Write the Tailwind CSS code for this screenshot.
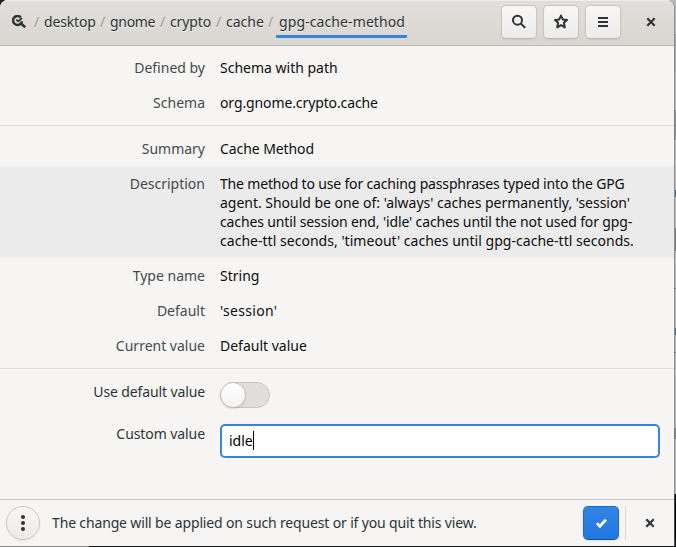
<!DOCTYPE html>
<html lang="en">
<head>
<meta charset="utf-8">
<title>gpg-cache-method</title>
<script src="https://cdn.jsdelivr.net/npm/@tailwindcss/browser@4"></script>
</head>
<body class="relative w-[676px] h-[547px] overflow-hidden bg-[#b9b9b9] font-['Noto_Sans','Open_Sans',sans-serif] text-[14px] leading-[19px] text-[#0c0e0f]">
<!-- Desktop behind the window -->
<div class="absolute inset-0">
  <div class="absolute left-0 top-0 w-4 h-4 bg-[#222]"></div>
  <div class="absolute left-[674px] top-[34px] w-[2px] h-[38px] bg-[#a5a5a5]"></div>
  <div class="absolute left-[674px] top-[110px] w-[2px] h-[30px] bg-[#929292]"></div>
  <div class="absolute left-[675px] top-[190px] w-px h-[7px] bg-[#496579]"></div>
  <div class="absolute left-[675px] top-[228px] w-px h-[23px] bg-[#777]"></div>
  <div class="absolute left-[674px] top-[288px] w-[2px] h-px bg-[#777]"></div>
  <div class="absolute left-[675px] top-[328px] w-px h-[7px] bg-[#496579]"></div>
  <div class="absolute left-[674px] top-[352px] w-[2px] h-px bg-[#777]"></div>
  <div class="absolute left-[674px] top-[428px] w-[2px] h-[11px] bg-[#858585]"></div>
  <div class="absolute left-[674px] top-[494px] w-[2px] h-[53px] bg-black"></div>
  <div class="absolute left-0 top-[540px] w-[89px] h-[7px] bg-[#8b8984]"></div>
  <div class="absolute left-[89px] top-[540px] w-[587px] h-[7px] bg-[#17171a]"></div>
</div>
<main class="relative w-[674px] h-[546px] flex flex-col bg-[#f6f5f4] rounded-t-[8px] overflow-hidden shadow-[1px_0_0_#77777799]">
  <header class="h-[46px] shrink-0 flex items-center border-b border-[#bfb8b1] bg-linear-to-b from-[#e1dedb] to-[#dad6d2] text-[#2e3436] shadow-[inset_0_1px_#f0eeec] [text-shadow:0_1px_#ffffffb0]">
    <svg class="ml-3 -mt-px w-[15px] h-[14px] shrink-0" viewBox="0 0 15 14" fill="none" stroke="#2e3436"><path d="M8.8 2.4A4.5 4.5 0 1 0 10 6.2" stroke-width="2.5"/><path d="M4.2 4.6L6.2 6.4L10 3" stroke-width="1.8"/><path d="M8.6 8.2L13.3 12.2" stroke-width="2.5"/></svg>
    <nav class="flex h-full pt-[12px] whitespace-nowrap">
      <span class="w-[17px] pl-[7px] text-[#929595]">/</span><span class="w-[52px] tracking-[-0.15px]">desktop</span>
      <span class="w-[14px] pl-[4px] text-[#929595]">/</span><span class="w-[46px] tracking-[-0.3px]">gnome</span>
      <span class="w-[14px] pl-[4px] text-[#929595]">/</span><span class="w-[42px] tracking-[-0.1px]">crypto</span>
      <span class="w-[14px] pl-[4px] text-[#929595]">/</span><span class="w-[38px]">cache</span>
      <span class="w-[12px] pl-[4px] text-[#929595]">/</span><span class="w-[131px] h-[26px] pl-[3px] border-b-3 border-[#3584e4] rounded-b-[1px] tracking-[0.1px]">gpg-cache-method</span>
    </nav>
    <div class="ml-auto mr-[18px] flex gap-[6px] items-center">
      <button class="w-9 h-[34px] mt-[-2px] grid place-items-center rounded-[5px] border border-[#cdc7c2] border-b-[#bfb8b1] bg-linear-to-b from-[#f8f7f6] to-[#edebe9] shadow-[0_1px_2px_#00000012]"><svg class="w-4 h-4" viewBox="0 0 16 16" fill="none" stroke="#2e3436" stroke-width="2"><circle cx="6.5" cy="6.2" r="4.5"/><path d="M9.8 9.5l4.4 4.4"/></svg></button>
      <button class="w-9 h-[34px] mt-[-2px] grid place-items-center rounded-[5px] border border-[#cdc7c2] border-b-[#bfb8b1] bg-linear-to-b from-[#f8f7f6] to-[#edebe9] shadow-[0_1px_2px_#00000012]"><svg class="w-4 h-4" viewBox="0 0 16 16" fill="none" stroke="#2e3436" stroke-width="2" stroke-linejoin="round"><path d="M8 1.6l1.8 3.8 4.2.5-3.1 2.9.9 4.6L8 11.2l-3.8 2.2.9-4.6L2 5.9l4.2-.5z"/></svg></button>
      <button class="w-9 h-[34px] mt-[-2px] grid place-items-center rounded-[5px] border border-[#cdc7c2] border-b-[#bfb8b1] bg-linear-to-b from-[#f8f7f6] to-[#edebe9] shadow-[0_1px_2px_#00000012]"><svg class="w-4 h-4" viewBox="0 0 16 16" fill="#2e3436"><path d="M3 3h10v2H3zM3 7h10v2H3zM3 11h10v2H3z"/></svg></button>
      <svg class="ml-[19px] -mt-px w-[10px] h-[10px]" viewBox="0 0 10 10" stroke="#2e3436" stroke-width="2.2"><path d="M1.3 1.3l7.4 7.4M8.7 1.3L1.3 8.7"/></svg>
    </div>
  </header>
  <section class="h-[80px] shrink-0 pt-1 border-b border-[#dddcda]">
    <div class="h-[35px] pt-2 flex gap-[15px]"><div class="w-[205px] text-right text-[#454a4c]">Defined by</div><div>Schema with path</div></div>
    <div class="h-[35px] pt-2 flex gap-[15px]"><div class="w-[205px] text-right text-[#454a4c]">Schema</div><div class="tracking-[-0.11px]">org.gnome.crypto.cache</div></div>
  </section>
  <section class="h-[243px] shrink-0 pt-[5px] border-b border-[#dddcda]">
    <div class="h-[35px] pt-2 flex gap-[15px]"><div class="w-[205px] text-right text-[#454a4c]">Summary</div><div class="tracking-[-0.08px]">Cache Method</div></div>
    <div class="h-[92px] pt-2 flex gap-[15px] bg-[#ebebeb]"><div class="w-[205px] text-right text-[#454a4c]">Description</div><div class="whitespace-nowrap"><span class="tracking-[-0.165px]">The method to use for caching passphrases typed into the GPG</span><br><span class="tracking-[-0.025px]">agent. Should be one of: 'always' caches permanently, 'session'</span><br><span class="tracking-[-0.13px]">caches until session end, 'idle' caches until the not used for gpg-</span><br><span class="tracking-[0.03px]">cache-ttl seconds, 'timeout' caches until gpg-cache-ttl seconds.</span></div></div>
    <div class="h-[35px] pt-2 flex gap-[15px]"><div class="w-[205px] text-right text-[#454a4c]">Type name</div><div>String</div></div>
    <div class="h-[35px] pt-2 flex gap-[15px]"><div class="w-[205px] text-right text-[#454a4c]">Default</div><div class="tracking-[0.3px]">'session'</div></div>
    <div class="h-[35px] pt-2 flex gap-[15px]"><div class="w-[205px] text-right text-[#454a4c]">Current value</div><div>Default value</div></div>
  </section>
  <section class="h-[130px] shrink-0 pt-[13px]">
    <div class="h-[42px] flex gap-[15px]"><div class="w-[205px] text-right text-[#2e3436] tracking-[-0.12px]">Use default value</div><div class="w-[50px] h-[26px] rounded-full border border-[#cdc7c2] bg-[#e1dedb]"><div class="w-[26px] h-[26px] -m-px rounded-full border border-[#c5bfba] bg-linear-to-b from-white to-[#f5f4f3] shadow-[0_1px_2px_#00000020]"></div></div></div>
    <div class="flex gap-[15px]"><div class="w-[205px] text-right text-[#2e3436] tracking-[-0.08px]">Custom value</div><div class="w-[440px] h-[34px] flex items-center pb-px px-[7px] rounded-[5px] border-2 border-[#3584e4] bg-white text-black"><span>idle</span><span class="w-px h-[19px] bg-black"></span></div></div>
  </section>
  <footer class="h-[47px] shrink-0 flex items-center border-t border-[#cdc7c2] text-[#2e3436]">
    <button class="ml-[6px] w-[34px] h-[34px] grid place-items-center rounded-full border border-[#cdc7c2] bg-linear-to-b from-[#f8f7f6] to-[#edebe9] shadow-[0_1px_2px_#00000015]"><svg class="w-4 h-4" viewBox="0 0 16 16" fill="#2e3436"><circle cx="8" cy="2" r="2"/><circle cx="8" cy="8" r="2"/><circle cx="8" cy="14" r="2"/></svg></button>
    <span class="ml-3 -mt-px whitespace-nowrap tracking-[-0.15px]">The change will be applied on such request or if you quit this view.</span>
    <div class="ml-auto flex items-center">
      <button class="w-9 h-[34px] grid place-items-center rounded-[5px] border border-[#1b6acb] border-b-[#15539e] bg-linear-to-b from-[#3584e4] to-[#2078df] shadow-[0_1px_2px_#00000018]"><svg class="w-4 h-4" viewBox="0 0 16 16" fill="none" stroke="white" stroke-width="2.8"><path d="M3.9 8.2l3 3 6-6.5"/></svg></button>
      <span class="ml-[6px] w-px h-[34px] bg-[#dbd9d6]"></span>
      <svg class="ml-[19px] mr-[19px] w-[10px] h-[10px]" viewBox="0 0 10 10" stroke="#2e3436" stroke-width="2.2"><path d="M1.3 1.3l7.4 7.4M8.7 1.3L1.3 8.7"/></svg>
    </div>
  </footer>
</main>
</body>
</html>
